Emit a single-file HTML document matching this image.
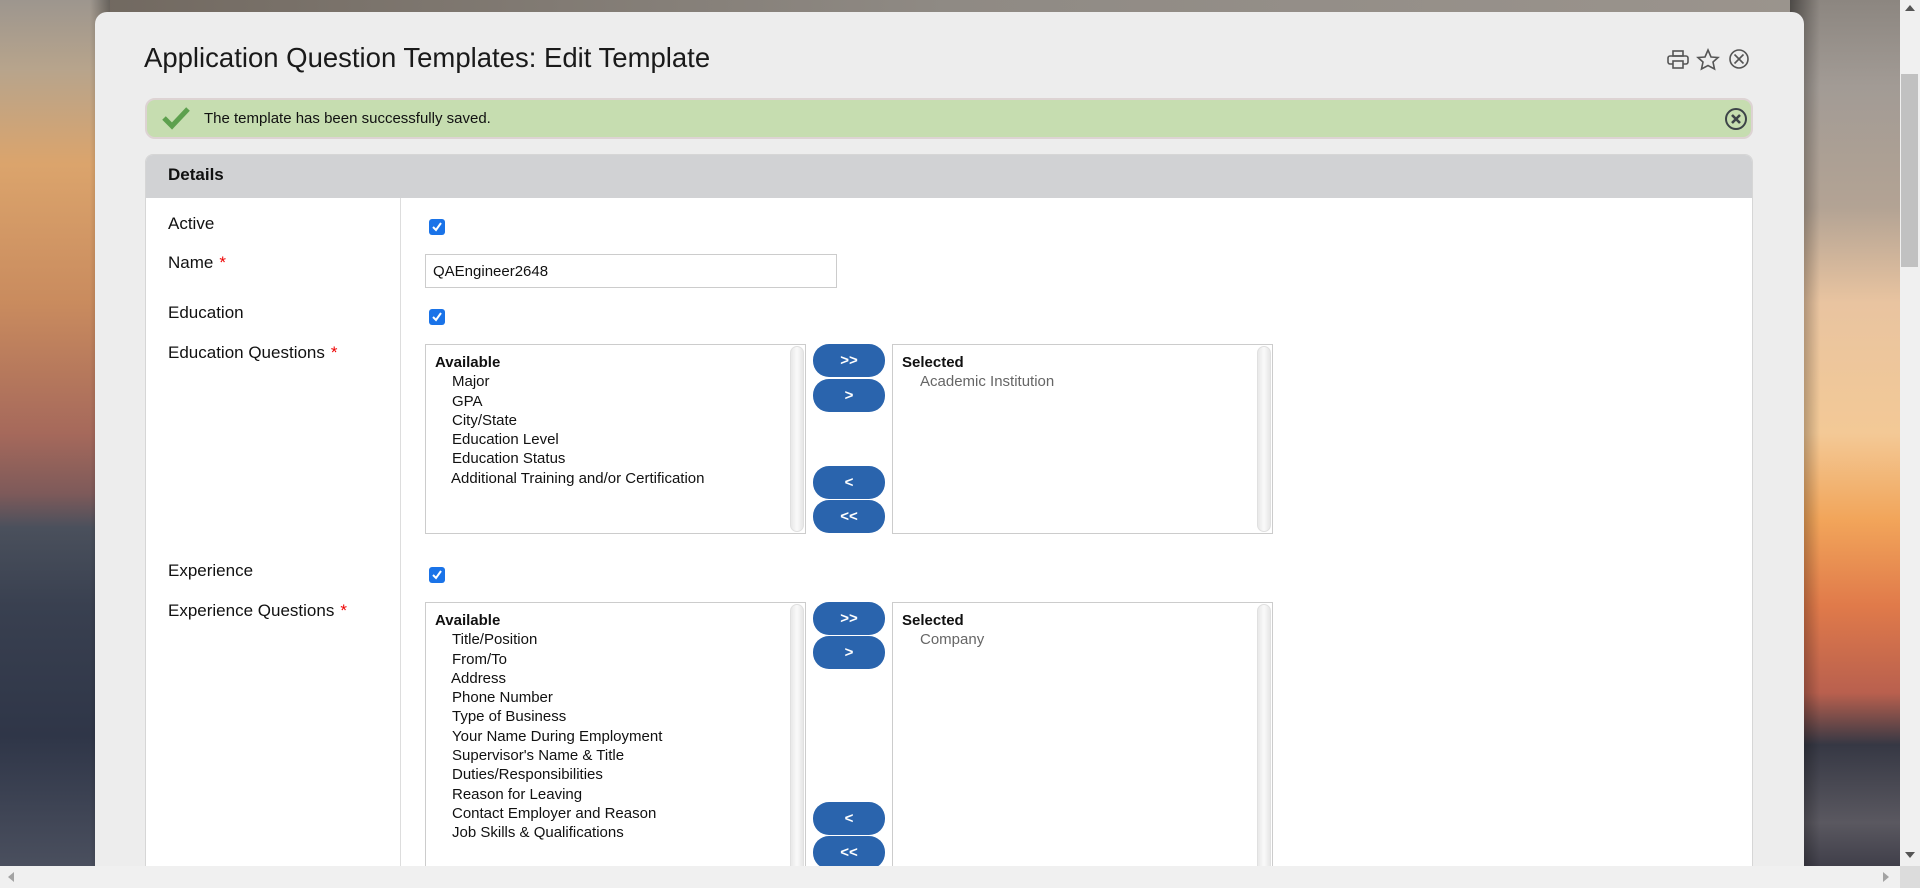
<!DOCTYPE html>
<html><head><meta charset="utf-8">
<style>
*{box-sizing:border-box;margin:0;padding:0}
html,body{width:1920px;height:888px;overflow:hidden;font-family:"Liberation Sans",Arial,sans-serif;color:#111}
body{position:relative;background:#888}
.bgl{position:absolute;left:0;top:0;width:110px;height:866px;background:linear-gradient(180deg,#9d968e 0%,#b7a48c 8%,#dba46c 19%,#c98b5e 35%,#a6695b 50%,#7e5a5a 57%,#4a505c 61%,#394050 70%,#2f3648 85%,#4a4f5e 100%)}
.bgr{position:absolute;left:1790px;top:0;width:110px;height:866px;background:linear-gradient(180deg,#8c8680 0%,#a29b95 10%,#b3a394 24%,#e9c4a0 35%,#f3c996 50%,#f2a55a 60%,#e07a4a 70%,#b9604e 80%,#363844 86%,#5a5860 95%,#403f4a 100%)}
.bgl:after{content:"";position:absolute;right:0;top:0;width:20px;height:100%;background:linear-gradient(90deg,rgba(0,0,0,0),rgba(0,0,0,.35))}
.bgr:before{content:"";position:absolute;left:0;top:0;width:30px;height:100%;background:linear-gradient(90deg,rgba(0,0,0,.45),rgba(0,0,0,0))}
.top{position:absolute;left:0;top:0;width:1900px;height:14px;background:linear-gradient(90deg,#6e655c,#8f8a84 50%,#9c958e)}
.modal{position:absolute;left:95px;top:12px;width:1709px;height:854px;background:#ededed;border-radius:12px 12px 0 0;overflow:hidden}
h1{position:absolute;left:49px;top:30px;font-size:27.5px;font-weight:normal;color:#1a1a1a}
.icons{position:absolute;left:1572px;top:36px}
.alert{position:absolute;left:50px;top:86px;width:1608px;height:41px;background:#c6ddb0;border:2px solid #ddd3d3;border-radius:10px}
.alert .txt{position:absolute;left:57px;top:10px;font-size:15px;color:#111}
.panel{position:absolute;left:50px;top:142px;width:1608px;height:760px;background:#fff;border:1px solid #d6d6d6;border-radius:8px 8px 0 0;overflow:hidden}
.ph{height:43px;background:#d1d2d4;padding:10px 22px;font-weight:bold;font-size:17px}
.div{position:absolute;left:254px;top:43px;width:1px;height:800px;background:#ddd}
.lbl{position:absolute;left:22px;font-size:17px;color:#111}
.lbl b{color:#e00;font-weight:normal;margin-left:6px}
.cb{position:absolute;left:283px;width:16px;height:16px;background:#1a73e8;border-radius:3px}
.cb svg{position:absolute;left:2px;top:2px}
.inp{position:absolute;left:279px;top:99px;width:412px;height:34px;border:1px solid #ccc;padding:8px 7px;font-size:15px}
.list{position:absolute;width:381px;border:1px solid #ccc;font-size:15px;line-height:19.3px;padding-top:8px}
.list .h{font-weight:bold;padding-left:9px}
.list .i{padding-left:26px}
.list .s{padding-left:27px;color:#666}
.list .sb{position:absolute;right:1px;top:1px;width:14px;bottom:1px;border-radius:8px;background:linear-gradient(90deg,#e8e8e8,#fafafa 50%,#e6e6e6);border:1px solid #e0e0e0}
.btn{position:absolute;left:667px;width:72px;height:33px;background:#2a64ad;border-radius:16px;color:#fff;font-size:15px;font-weight:bold;text-align:center;line-height:33px}
.vs{position:absolute;left:1900px;top:0;width:20px;height:866px;background:#f0f0f0}
.hs{position:absolute;left:0;top:866px;width:1920px;height:22px;background:#f0f0f0}
</style></head><body>
<div class="top"></div>
<div class="bgl"></div><div class="bgr"></div>
<div class="modal">
 <h1>Application Question Templates: Edit Template</h1>
 <div class="icons">
  <svg width="90" height="24" viewBox="0 0 90 24" fill="none" stroke="#555" stroke-width="1.6">
   <rect x="6" y="3" width="10" height="5"/><rect x="1" y="8" width="20" height="8" rx="2"/><rect x="6" y="13" width="10" height="7" fill="#ededed"/>
   <path d="M41 2 L44 9 L51 9.5 L46 14 L47.5 21 L41 17.5 L34.5 21 L36 14 L31 9.5 L38 9 Z"/>
   <circle cx="72" cy="11" r="9"/><path d="M67.5 6.5 L76.5 15.5 M76.5 6.5 L67.5 15.5"/>
  </svg>
 </div>
 <div class="alert">
  <svg style="position:absolute;left:14px;top:6px" width="30" height="24" viewBox="0 0 30 24"><path d="M3 12 L11 20 L27 3" fill="none" stroke="#5da04e" stroke-width="5"/></svg>
  <div class="txt">The template has been successfully saved.</div>
  <svg style="position:absolute;left:1577px;top:7px" width="24" height="24" viewBox="0 0 24 24" fill="none" stroke="#3d4448" stroke-width="2"><circle cx="12" cy="12" r="10"/><path d="M8 8 L16 16 M16 8 L8 16" stroke-width="2.6"/></svg>
 </div>
 <div class="panel">
  <div class="ph">Details</div>
  <div class="div"></div>
  <div class="lbl" style="top:59px">Active</div>
  <div class="cb" style="top:64px"><svg width="12" height="12"><path d="M2 6 L5 9 L10 2" stroke="#fff" stroke-width="2" fill="none"/></svg></div>
  <div class="lbl" style="top:98px">Name<b>*</b></div>
  <div class="inp">QAEngineer2648</div>
  <div class="lbl" style="top:148px">Education</div>
  <div class="cb" style="top:154px"><svg width="12" height="12"><path d="M2 6 L5 9 L10 2" stroke="#fff" stroke-width="2" fill="none"/></svg></div>
  <div class="lbl" style="top:188px">Education Questions<b>*</b></div>
  <div class="list" style="left:279px;top:189px;height:190px"><div class="h">Available</div><div class="i">Major</div><div class="i">GPA</div><div class="i">City/State</div><div class="i">Education Level</div><div class="i">Education Status</div><div class="i" style="padding-left:25px">Additional Training and/or Certification</div><div class="sb"></div></div>
  <div class="btn" style="top:189px">&gt;&gt;</div>
  <div class="btn" style="top:224px">&gt;</div>
  <div class="btn" style="top:311px">&lt;</div>
  <div class="btn" style="top:345px">&lt;&lt;</div>
  <div class="list" style="left:746px;top:189px;height:190px"><div class="h">Selected</div><div class="s">Academic Institution</div><div class="sb"></div></div>
  <div class="lbl" style="top:406px">Experience</div>
  <div class="cb" style="top:412px"><svg width="12" height="12"><path d="M2 6 L5 9 L10 2" stroke="#fff" stroke-width="2" fill="none"/></svg></div>
  <div class="lbl" style="top:446px">Experience Questions<b>*</b></div>
  <div class="list" style="left:279px;top:447px;height:300px"><div class="h">Available</div><div class="i">Title/Position</div><div class="i">From/To</div><div class="i" style="padding-left:25px">Address</div><div class="i">Phone Number</div><div class="i">Type of Business</div><div class="i">Your Name During Employment</div><div class="i">Supervisor's Name &amp; Title</div><div class="i">Duties/Responsibilities</div><div class="i">Reason for Leaving</div><div class="i">Contact Employer and Reason</div><div class="i">Job Skills &amp; Qualifications</div><div class="sb"></div></div>
  <div class="btn" style="top:447px">&gt;&gt;</div>
  <div class="btn" style="top:481px">&gt;</div>
  <div class="btn" style="top:647px">&lt;</div>
  <div class="btn" style="top:681px">&lt;&lt;</div>
  <div class="list" style="left:746px;top:447px;height:300px"><div class="h">Selected</div><div class="s">Company</div><div class="sb"></div></div>
 </div>
</div>
<div class="vs">
 <svg style="position:absolute;left:5px;top:5px" width="10" height="6"><path d="M0 6 L5 0 L10 6Z" fill="#555"/></svg>
 <div style="position:absolute;left:1px;top:74px;width:17px;height:193px;background:#c1c1c1"></div>
 <svg style="position:absolute;left:5px;top:852px" width="10" height="6"><path d="M0 0 L5 6 L10 0Z" fill="#555"/></svg>
</div>
<div class="hs">
 <svg style="position:absolute;left:8px;top:6px" width="6" height="10"><path d="M6 0 L0 5 L6 10Z" fill="#a3a3a3"/></svg>
 <svg style="position:absolute;left:1883px;top:6px" width="6" height="10"><path d="M0 0 L6 5 L0 10Z" fill="#a3a3a3"/></svg>
 <div style="position:absolute;left:1900px;top:0;width:20px;height:22px;background:#dcdcdc"></div>
</div>
</body></html>
